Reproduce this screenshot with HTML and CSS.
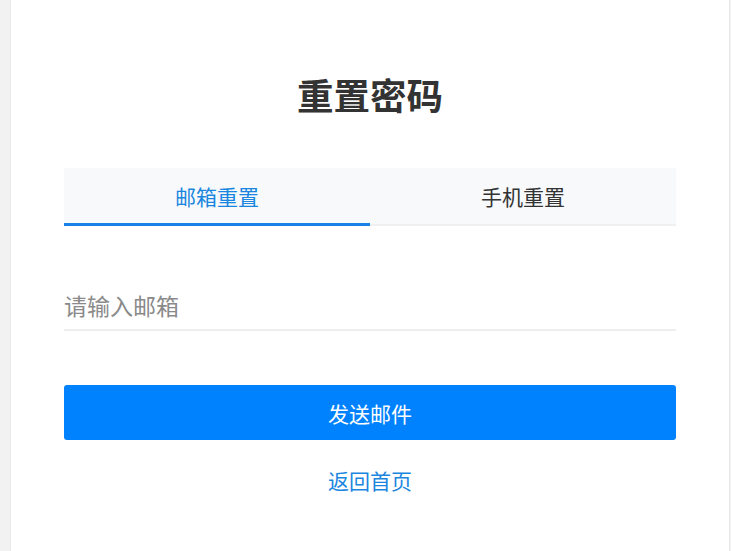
FILE: index.html
```html
<!DOCTYPE html>
<html lang="zh-CN">
<head>
<meta charset="utf-8">
<title>重置密码</title>
<link rel="stylesheet" href="styles.css">
</head>
<body>
<main class="card">
  <h1 class="title">重置密码</h1>
  <div class="tabs">
    <div class="tab active">邮箱重置</div>
    <div class="tab">手机重置</div>
  </div>
  <div class="field">
    <input class="input" type="text" placeholder="请输入邮箱">
  </div>
  <button class="btn">发送邮件</button>
  <a class="back" href="#">返回首页</a>
</main>
</body>
</html>
```

FILE: styles.css
```css
* { box-sizing: border-box; }
html, body { margin: 0; padding: 0; }
body {
  background: #f2f2f2;
  font-family: "Noto Sans CJK SC", "Noto Sans", sans-serif;
  height: 551px;
  overflow: hidden;
}
.card {
  margin-left: 10px;
  width: 720px;
  height: 551px;
  background: #fff;
  border-left: 1px solid #e9e9e9;
  border-right: 1px solid #e9e9e9;
  padding: 0 53px;
  display: flex;
  flex-direction: column;
}
.title {
  margin: 71px 0 0;
  height: 47px;
  line-height: 47px;
  font-size: 36.5px;
  font-weight: 700;
  color: #333;
  text-align: center;
}
.tabs {
  margin-top: 50px;
  display: flex;
  background: #f7f9fb;
  border-bottom: 2px solid #eef0f2;
}
.tab {
  flex: 1;
  height: 58px;
  line-height: 56px;
  text-align: center;
  font-size: 21px;
  color: #333;
  border-bottom: 3px solid transparent;
  margin-bottom: -2px;
}
.tab.active {
  color: #1a86e0;
  border-bottom-color: #1783e6;
}
.field {
  margin-top: 54px;
  border-bottom: 2px solid #eceeef;
}
.input {
  display: block;
  width: 100%;
  height: 49px;
  border: none;
  outline: none;
  padding: 0;
  font-family: inherit;
  font-size: 23px;
  color: #333;
  background: transparent;
}
.input::placeholder { color: #8a8a8a; }
.btn {
  margin-top: 54px;
  height: 55px;
  width: 100%;
  border: none;
  border-radius: 3px;
  background: #0082ff;
  color: #fff;
  font-family: inherit;
  font-size: 21px;
}
.back {
  margin-top: 25px;
  align-self: center;
  font-size: 21px;
  line-height: 30px;
  color: #1a86e0;
  text-decoration: none;
}
```
